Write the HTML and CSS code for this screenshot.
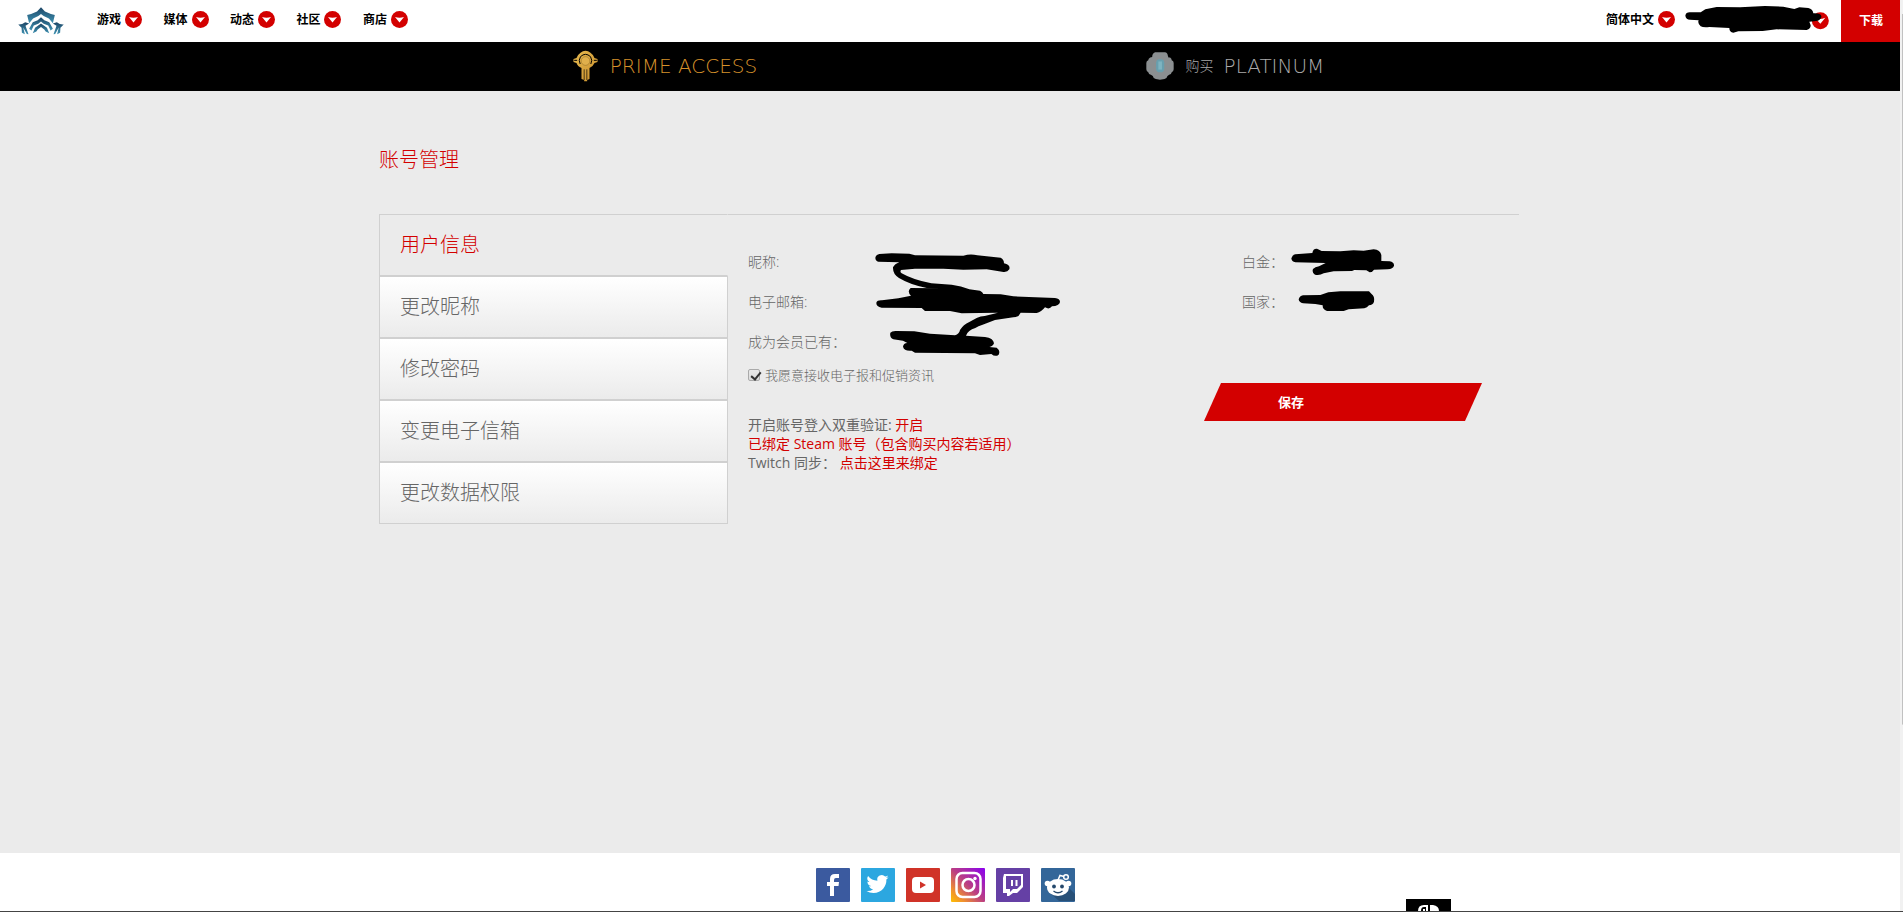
FILE: index.html
```html
<!DOCTYPE html>
<html lang="zh-CN">
<head>
<meta charset="utf-8">
<title>账号管理</title>
<link rel="stylesheet" href="styles.css">
</head>
<body>
<svg class="defs" aria-hidden="true">
  <symbol id="chevron" viewBox="0 0 17 17"><circle cx="8.5" cy="8.5" r="8.5" fill="#d30000"/><path d="M4 6q4.500 1.500 9 0L8.500 11.500z" fill="#fff"/></symbol>
</svg>

<header class="topbar">
  <a class="logo" href="#" aria-label="首页">
    <svg viewBox="50 20 144 88" width="48" height="29">
      <defs><linearGradient id="lotus" x1="0" y1="0" x2="0" y2="1"><stop offset="0" stop-color="#1d4666"/><stop offset="1" stop-color="#3f93b3"/></linearGradient></defs>
      <g fill="url(#lotus)">
        <path d="M122 21L134 34Q150 42 164 44L158 69L146 55Q130 49 122 41Q114 49 98 55L86 69L80 44Q94 42 110 34z"/>
        <path d="M122 51L132 60L147 66L158 86L151 91L144 76L130 71L122 64L114 71L100 76L93 91L86 86L97 66L112 60z"/>
        <path d="M122 70L140 83L147 100L136 94L132 88L122 81L112 88L108 94L97 100L104 83z"/>
        <path d="M53 73Q64 74 74 66L86 70L75 77L84 103L79 102L68 82L73 103L64 98L63 83z"/>
        <path d="M191 73Q180 74 170 66L158 70L169 77L160 103L165 102L176 82L171 103L180 98L181 83z"/>
      </g>
    </svg>
  </a>
  <nav class="menu">
    <button class="drop">游戏<svg class="badge"><use href="#chevron"/></svg></button>
    <button class="drop">媒体<svg class="badge"><use href="#chevron"/></svg></button>
    <button class="drop">动态<svg class="badge"><use href="#chevron"/></svg></button>
    <button class="drop">社区<svg class="badge"><use href="#chevron"/></svg></button>
    <button class="drop">商店<svg class="badge"><use href="#chevron"/></svg></button>
  </nav>
  <div class="session">
    <button class="drop">简体中文<svg class="badge"><use href="#chevron"/></svg></button>
    <button class="drop user" aria-label="账号">
      <svg viewBox="315 12 432 84" width="144" height="28">
        <circle cx="721" cy="59" r="25.500" fill="#d30000"/><path d="M706 52Q720 57 736 50L721 68z" fill="#fff"/>
        <path d="M329 34Q318 34 316 44Q318 56 330 56L356 58Q352 66 362 76Q370 80 388 78L448 81Q448 94 460 95L475 91L548 90L590 85L680 87Q692 84 692 73L688 62L714 59Q725 54 724 45Q722 36 700 37Q698 24 685 21L658 19L643 24L610 17L555 15L480 19L410 18L376 25L362 34z"/>
      </svg>
    </button>
    <a class="download" href="#">下载</a>
  </div>
</header>

<div class="promo">
  <div class="promo-row">
    <a class="promo-link prime" href="#">
      <svg viewBox="86 30 74 96" width="25" height="32">
        <defs><linearGradient id="gold" x1="0" y1="0" x2="1" y2="1"><stop offset="0" stop-color="#e6ba50"/><stop offset="1" stop-color="#c98f2c"/></linearGradient></defs>
        <path fill="url(#gold)" d="M108 38Q115 32 123 32Q131 32 138 38Q147 44 150 54L159 57V66L150 69Q146 79 135 84V117L128 120V124H119V120L111 117V84Q99 79 96 69L87 66V57L96 54Q99 44 108 38z"/>
        <path fill="none" stroke="#000" stroke-width="3" d="M107 72Q101 61 108 50Q123 36 138 50Q145 61 139 72"/>
        <circle cx="123" cy="63" r="13" fill="#e0b04c" stroke="#6b4b16" stroke-width="1"/>
        <path d="M119 88V120M127 88V120" stroke="#000" stroke-width="2"/><path d="M89 61H98M148 61H157" stroke="#000" stroke-width="3"/>
      </svg>
      <span class="wide">PRIME ACCESS</span>
    </a>
    <a class="promo-link platinum" href="#">
      <svg viewBox="68 35 86 86" width="28" height="28">
        <path fill="#8b8f91" d="M96 36H126Q134 37 135 46L137 52H142Q147 55 147 60Q153 62 153 69V88Q153 95 147 97Q146 104 139 105L134 109Q132 117 125 118L111 120L98 118Q90 117 89 109L83 105Q76 104 75 97Q69 95 69 88V69Q69 62 75 60Q75 55 81 52L87 50Q87 39 96 36z"/>
        <path fill="#689fae" d="M106 57H117Q124 59 124 68V87Q124 95 117 97H106Q99 95 99 87V68Q99 59 106 57z"/>
        <path fill="#7eb4c1" d="M106 64H117V89H106z"/>
      </svg>
      <span class="buy">购买</span><span class="wide">PLATINUM</span>
    </a>
  </div>
</div>

<main class="content">
  <h1>账号管理</h1>
  <section class="account">
    <nav class="tabs">
      <a class="tab active" href="#">用户信息</a>
      <a class="tab" href="#">更改昵称</a>
      <a class="tab" href="#">修改密码</a>
      <a class="tab" href="#">变更电子信箱</a>
      <a class="tab" href="#">更改数据权限</a>
    </nav>
    <form class="details">
      <div class="profile">
        <p class="field">昵称:</p>
        <p class="field">电子邮箱:</p>
        <p class="field">成为会员已有：</p>
        <label class="news"><input type="checkbox" checked><span>我愿意接收电子报和促销资讯</span></label>
        <div class="links">
          <p>开启账号登入双重验证: <a href="#">开启</a></p>
          <p><a href="#">已绑定 Steam 账号（包含购买内容若适用）</a></p>
          <p>Twitch 同步： <a href="#">点击这里来绑定</a></p>
        </div>
        <svg class="mask mask-profile" viewBox="435 66 558 312" width="186" height="104">
          <path d="M448 72L485 70L538 71L555 76L700 77Q722 70 742 76L812 83Q822 88 822 100Q842 104 838 118Q832 128 816 125L770 118L700 119L640 116L555 116L513 120Q509 126 515 130Q550 150 604 160L665 164Q694 168 718 178L750 182Q758 186 760 192L812 193L850 199L975 204Q990 206 990 216Q988 228 966 229Q958 240 945 232Q934 246 920 249L872 248Q866 262 850 262L795 270L758 284Q744 288 736 294Q714 300 708 317L765 321Q790 324 792 340Q788 350 778 351L800 353Q812 362 806 374Q796 382 784 372L750 375L735 370L555 368L545 362Q522 364 519 350Q520 340 532 339L519 332L490 328Q478 322 481 308Q486 302 500 303L553 304L600 311L675 316Q688 312 690 300Q700 284 718 276L740 264Q752 258 764 258L804 248L695 250L660 243L585 243L575 234L455 233Q438 230 439 218Q442 210 456 211L505 205L543 197Q530 184 542 174L640 175L590 174Q540 164 507 144Q488 132 489 112Q494 102 508 97L445 95Q436 92 436 83Q438 74 448 72z"/>
        </svg>
      </div>
      <div class="wallet">
        <p class="field">白金：</p>
        <p class="field">国家：</p>
        <button class="save" type="button">保存</button>
        <svg class="mask mask-wallet" viewBox="332 143 312 192" width="104" height="64">
          <path d="M345 162L396 158Q398 144 410 145L424 152L480 153L520 150L550 151L580 147Q600 149 603 164V182L628 183Q642 186 641 196Q638 206 622 207L581 208Q576 216 568 216L558 210L522 209L515 212L460 213L430 219Q418 226 404 223Q394 218 398 206Q404 200 416 198L436 188L345 186Q334 184 333 174Q336 164 345 162z"/>
          <path d="M368 285L420 284L444 276L480 273H566L573 280Q584 288 581 304Q578 314 566 315Q560 322 552 324L505 327L490 332H440Q426 328 427 315L405 311L368 309Q356 306 355 297Q358 287 368 285z"/>
        </svg>
      </div>
    </form>
  </section>
</main>

<footer class="footer">
  <div class="social">
    <a href="#" aria-label="Facebook"><svg viewBox="0 0 34 34"><rect width="34" height="34" rx="1" fill="#3b5a9f"/><path fill="#fff" d="M14 28V18h-3v-4h3v-3q0-5 5-5h4v4h-3q-2 0-2 2v2h5l-.5 4H18v10z"/></svg></a>
    <a href="#" aria-label="Twitter"><svg viewBox="0 0 34 34"><rect width="34" height="34" rx="1" fill="#2ca7e0"/><path fill="#fff" transform="translate(5.500 5) scale(.92)" d="M23.950 4.600a10 10 0 0 1-2.800.8 5 5 0 0 0 2.200-2.700 10 10 0 0 1-3.100 1.200 4.900 4.900 0 0 0-8.400 4.500A14 14 0 0 1 1.700 3.200a4.900 4.900 0 0 0 1.500 6.600 5 5 0 0 1-2.200-.6 4.900 4.900 0 0 0 4 4.900 5 5 0 0 1-2.300.1 4.900 4.900 0 0 0 4.600 3.400A10 10 0 0 1 0 19.500a14 14 0 0 0 7.600 2.200c9 0 14.500-7.800 14-14.700a10 10 0 0 0 2.350-2.400z"/></svg></a>
    <a href="#" aria-label="YouTube"><svg viewBox="0 0 34 34"><rect width="34" height="34" rx="1" fill="#d03328"/><rect x="6" y="9" width="22" height="16" rx="4" fill="#fff"/><path fill="#d03328" d="M14 13.500v7l6-3.500z"/></svg></a>
    <a href="#" aria-label="Instagram"><svg viewBox="0 0 34 34"><defs><linearGradient id="insta" x1="0" y1="1" x2="1" y2="0"><stop offset="0" stop-color="#ffc000"/><stop offset=".2" stop-color="#f09030"/><stop offset=".5" stop-color="#bb3f82"/><stop offset="1" stop-color="#8a00f0"/></linearGradient></defs><rect width="34" height="34" rx="1" fill="url(#insta)"/><g fill="none" stroke="#fff" stroke-width="2.500"><rect x="5.500" y="5" width="24" height="24" rx="6"/><circle cx="17.500" cy="17" r="6"/></g><circle cx="24" cy="10.500" r="1.700" fill="#fff"/></svg></a>
    <a href="#" aria-label="Twitch"><svg viewBox="0 0 34 34"><rect width="34" height="34" rx="1" fill="#6540a5"/><path fill="#fff" fill-rule="evenodd" d="M8 6h19v13l-6 6h-4l-4 3h-2v-3H7V10zM10 8v13h4v3l3-3h4l4-4V8z"/><path stroke="#fff" stroke-width="2" d="M16 12v6M20.500 12v6"/></svg></a>
    <a href="#" aria-label="Reddit"><svg viewBox="0 0 34 34"><rect width="34" height="34" rx="1" fill="#336699"/><path fill="#285078" d="M28 20L34 26V33H18L9 25z"/><g fill="#fff"><ellipse cx="17" cy="19.500" rx="11" ry="8.500"/><circle cx="6.500" cy="15.500" r="2.800"/><circle cx="27.500" cy="15.500" r="2.800"/></g><path d="M17 12L19 7.500L23 8.500" fill="none" stroke="#fff" stroke-width="1.500"/><circle cx="25" cy="9" r="2.300" fill="#336699" stroke="#fff" stroke-width="1.500"/><g fill="#25486c"><circle cx="13" cy="18.500" r="1.900"/><circle cx="21" cy="18.500" r="1.900"/></g><path d="M12.500 23Q17 26.500 21.500 23" fill="none" stroke="#25486c" stroke-width="1.300"/></svg></a>
  </div>
  <svg class="platform" viewBox="0 0 45 12" width="45" height="12"><rect width="45" height="12"/><path fill="#fff" d="M12 12Q12 6 18 6H22V12H20V8H18Q15 8 15 12zM24 6H27Q33 7 33 12H24zM17 10h2v2h-2z"/></svg>
</footer>
<div class="scroll" aria-hidden="true"></div>
</body>
</html>
```

FILE: styles.css
```css
* { box-sizing: border-box; }

body {
  margin: 0;
  padding-right: 3px;
  min-height: 100vh;
  display: flex;
  flex-direction: column;
  background: #ebebeb;
  color: #666;
  font: 300 14px/20px "Open Sans", "Noto Sans CJK SC", sans-serif;
}

p { margin: 0; }
a { color: #d30000; text-decoration: none; }
svg { display: block; flex: none; }
.defs { position: absolute; width: 0; height: 0; }

.topbar {
  display: flex;
  height: 42px;
  background: #fff;
}
.logo { padding: 7px 0 0 17px; }
.menu {
  display: flex;
  justify-content: space-between;
  width: 311px;
  margin-left: 32px;
}
.drop {
  display: flex;
  align-items: center;
  gap: 4px;
  height: 38px;
  padding: 0;
  border: 0;
  background: none;
  color: #000;
  font: bold 12px/20px "Noto Sans CJK SC", sans-serif;
}
.badge { width: 17px; height: 17px; }
.session { display: flex; margin-left: auto; }
.user { margin: 0 12px 0 10px; }
.download {
  padding: 0 17px 0 18px;
  background: #d30000;
  color: #fff;
  font: bold 12px/40px "Noto Sans CJK SC", sans-serif;
}

.promo { background: #000; }
.promo-row {
  display: grid;
  grid-template-columns: 1fr 1fr;
  max-width: 1140px;
  height: 49px;
  margin: 0 auto;
  padding-bottom: 2px;
}
.promo-link {
  display: flex;
  align-items: center;
  justify-content: center;
  gap: 12px;
  color: #aaa;
}
.prime { color: #d6912b; }
.wide { font: 200 20px/24px "DejaVu Sans", sans-serif; }
.buy { margin-right: -2px; }

.content {
  flex: 1;
  width: 100%;
  max-width: 1142px;
  margin: 0 auto;
}
h1 {
  margin: 54px 0 39px;
  color: #d30000;
  font-size: 20px;
  font-weight: 300;
  line-height: 30px;
}
.account {
  display: flex;
  margin-right: 2px;
  border-top: 1px solid #d0d0d0;
}
.tabs { flex: none; width: 349px; margin-top: -1px; }
.tab {
  display: block;
  height: 62px;
  padding-left: 20px;
  border: 1px solid #d0d0d0;
  background: linear-gradient(#fff, #ebebeb);
  color: #666;
  font-size: 20px;
  line-height: 60px;
}
.active {
  border-right-color: transparent;
  background: #ebebeb;
  color: #d30000;
}
.details {
  flex: 1;
  display: grid;
  grid-template-columns: 1fr 315px;
  padding: 27px 0 0 20px;
}
.profile, .wallet { position: relative; }
.field { line-height: 40px; }
.wallet .field { padding-left: 38px; }
.news {
  display: flex;
  align-items: center;
  gap: 5px;
  height: 26px;
  font-size: 13px;
}
.news input {
  appearance: none;
  width: 12px;
  height: 12px;
  margin: 0;
  border: 1px solid #aaa;
  border-radius: 2px;
  background: linear-gradient(#e8e8e8, #ddd);
}
.news input:checked::after {
  content: "";
  display: block;
  width: 4px;
  height: 8px;
  margin: 0 0 0 4px;
  border: solid #333;
  border-width: 0 2px 2px 0;
  transform: rotate(40deg);
}
.links { margin-top: 27px; font-weight: 400; line-height: 19px; }
.mask { position: absolute; }
.mask-profile { left: 127px; top: 10px; }
.mask-wallet { left: 87px; top: 6px; }
.save {
  display: block;
  width: 278px;
  height: 38px;
  margin-top: 61px;
  padding: 0 0 0 74px;
  border: 0;
  background: #d30000;
  clip-path: polygon(17px 0, 100% 0, calc(100% - 17px) 100%, 0 100%);
  color: #fff;
  font: bold 13px/20px "Noto Sans CJK SC", sans-serif;
  text-align: left;
}

.footer {
  display: grid;
  grid-template-columns: 1fr auto 1fr;
  padding-right: 12px;
  background: #fff;
  border-bottom: 1px solid #444;
  margin-right: -3px;
}
.social {
  grid-column: 2;
  display: flex;
  gap: 11px;
  padding: 15px 0 9px;
}
.social svg { width: 34px; height: 34px; }
.platform { align-self: end; margin-left: 331px; }

.scroll {
  position: fixed;
  top: 0;
  right: 0;
  bottom: 1px;
  width: 3px;
  background: linear-gradient(#c1c1c1, #c1c1c1) 2px 14px / 1px 78% no-repeat #f1f1f1;
}
```
